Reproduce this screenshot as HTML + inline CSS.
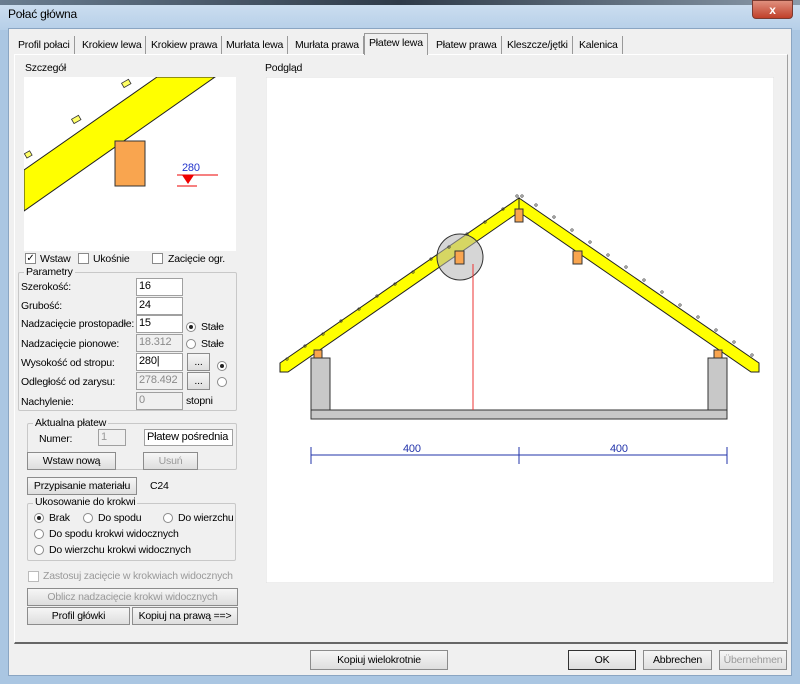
<!DOCTYPE html>
<html><head><meta charset="utf-8"><style>
*{box-sizing:border-box;margin:0;padding:0}
body{width:800px;height:684px;overflow:hidden;background:#aac6e2;font-family:"Liberation Sans",sans-serif;font-size:10.5px;letter-spacing:-0.2px;color:#000;position:relative}
.a{position:absolute;white-space:nowrap}
.title{left:0;top:0;width:800px;height:30px;background:linear-gradient(#cfe0f1,#b6cfe8)}
.body{left:8px;top:28px;width:784px;height:648px;background:#f0f0f0;border:1px solid #8aa5c2}
.tab{top:36px;height:18px;padding:3px 4px 0;border-right:1px solid #999;background:#f0f0f0}
.inp{height:18px;background:#fff;border:1px solid #a0a0a0;padding:1px 2px;font-size:11px}
.dis{color:#8a8a8a;background:#f0f0f0}
.btn{height:18px;background:linear-gradient(#f6f6f6,#dedede);border:1px solid #8c8c8c;text-align:center;padding-top:2px}
.grp{border:1px solid #c8c8c8;border-radius:2px}
.lg{background:#f0f0f0;padding:0 2px}
.rb{width:10px;height:10px;border:1px solid #8a8a8a;border-radius:50%;background:#fff}
.rb.on::after{content:"";position:absolute;left:2px;top:2px;width:4px;height:4px;border-radius:50%;background:#222}
.cb{width:11px;height:11px;border:1px solid #8a8a8a;background:#fff}
</style></head><body>
<div class="a title"></div>
<div class="a" style="left:0;top:0;width:800px;height:5px;background:linear-gradient(90deg,#6a7d90,#2e3a48 50%,#8a9aaa)"></div>
<div class="a" style="left:8px;top:7px;font-size:12px">Połać główna</div>
<div class="a" style="left:752px;top:0;width:41px;height:19px;background:linear-gradient(#e0907e,#c0402a);border:1px solid #7a3a30;border-radius:0 0 4px 4px;color:#fff;text-align:center;font-weight:bold;font-size:12px;padding-top:2px">x</div>
<div class="a body"></div>
<div class="a" style="left:14px;top:54px;width:774px;height:590px;border:1px solid #a0a0a0;border-left-color:#fff;border-top-color:#fff;border-bottom:2px solid #666"></div>
<div class="a tab" style="left:14px">Profil połaci</div>
<div class="a tab" style="left:78px">Krokiew lewa</div>
<div class="a tab" style="left:147px">Krokiew prawa</div>
<div class="a tab" style="left:222px">Murłata lewa</div>
<div class="a tab" style="left:291px">Murłata prawa</div>
<div class="a tab" style="left:364px;top:33px;height:22px;border:1px solid #999;border-bottom:none;background:#f0f0f0">Płatew lewa</div>
<div class="a tab" style="left:432px">Płatew prawa</div>
<div class="a tab" style="left:503px">Kleszcze/jętki</div>
<div class="a tab" style="left:575px">Kalenica</div>

<div class="a" style="left:25px;top:62px">Szczegół</div>
<div class="a" style="left:265px;top:62px">Podgląd</div>

<svg class="a" style="left:24px;top:77px" width="212" height="174" viewBox="24 77 212 174">
<rect x="24" y="77" width="212" height="174" fill="#fff"/>
<polygon points="24,170 157,77 215,77 24,211" fill="#ff0" stroke="#222" stroke-width="1"/>
<rect x="115" y="141" width="30" height="45" fill="#f9a54f" stroke="#333"/>
<g fill="#ff6" stroke="#333" stroke-width=".8"><rect x="122" y="81" width="8" height="5" transform="rotate(-30 126 83)"/><rect x="72" y="117" width="8" height="5" transform="rotate(-30 76 119)"/><rect x="25" y="152" width="6" height="5" transform="rotate(-30 28 154)"/></g>
<text x="182" y="171" fill="#2233cc" font-size="11" font-family="Liberation Sans">280</text>
<line x1="177" y1="175" x2="218" y2="175" stroke="#e00"/>
<polygon points="182,175 194,175 188,184" fill="#e00"/>
<line x1="177" y1="186" x2="197" y2="186" stroke="#e00"/>
</svg>

<svg class="a" style="left:266px;top:77px" width="508" height="506" viewBox="266 77 508 506">
<rect x="266" y="77" width="508" height="506" fill="#fff" stroke="#ddd"/>
<rect x="311" y="358" width="19" height="52" fill="#c8c8c8" stroke="#333"/>
<rect x="708" y="358" width="19" height="52" fill="#c8c8c8" stroke="#333"/>
<rect x="311" y="410" width="416" height="9" fill="#c8c8c8" stroke="#333"/>
<polygon points="280,363 519,198 519,212 288,372 280,372" fill="#ff0" stroke="#222"/>
<polygon points="519,198 759,363 759,372 751,372 519,212" fill="#ff0" stroke="#222"/>
<circle cx="460" cy="257" r="23" fill="rgba(180,180,180,.55)" stroke="#333"/>
<g fill="#f9a54f" stroke="#333"><rect x="455" y="251" width="9" height="13"/><rect x="573" y="251" width="9" height="13"/><rect x="515" y="209" width="8" height="13"/><rect x="314" y="350" width="8" height="8"/><rect x="714" y="350" width="8" height="8"/></g>
<line x1="473" y1="264" x2="473" y2="410" stroke="#e33"/>
<g stroke="#333" fill="none" stroke-width=".7">
<circle cx="287" cy="359" r="1.2"/><circle cx="305" cy="346" r="1.2"/><circle cx="323" cy="334" r="1.2"/><circle cx="341" cy="321" r="1.2"/><circle cx="359" cy="309" r="1.2"/><circle cx="377" cy="296" r="1.2"/><circle cx="395" cy="284" r="1.2"/><circle cx="413" cy="272" r="1.2"/><circle cx="431" cy="259" r="1.2"/><circle cx="449" cy="247" r="1.2"/><circle cx="467" cy="234" r="1.2"/><circle cx="485" cy="222" r="1.2"/><circle cx="503" cy="209" r="1.2"/><circle cx="517" cy="196" r="1.2"/><circle cx="522" cy="196" r="1.2"/>
<circle cx="536" cy="205" r="1.2"/><circle cx="554" cy="217" r="1.2"/><circle cx="572" cy="230" r="1.2"/><circle cx="590" cy="242" r="1.2"/><circle cx="608" cy="255" r="1.2"/><circle cx="626" cy="267" r="1.2"/><circle cx="644" cy="280" r="1.2"/><circle cx="662" cy="292" r="1.2"/><circle cx="680" cy="305" r="1.2"/><circle cx="698" cy="317" r="1.2"/><circle cx="716" cy="330" r="1.2"/><circle cx="734" cy="342" r="1.2"/><circle cx="752" cy="355" r="1.2"/></g>
<g stroke="#2233aa"><line x1="311" y1="455" x2="727" y2="455"/><line x1="311" y1="447" x2="311" y2="464"/><line x1="519" y1="447" x2="519" y2="464"/><line x1="727" y1="447" x2="727" y2="464"/></g>
<text x="403" y="452" fill="#2233aa" font-size="11" font-family="Liberation Sans">400</text>
<text x="610" y="452" fill="#2233aa" font-size="11" font-family="Liberation Sans">400</text>
</svg>

<div class="a cb" style="left:25px;top:253px;font-size:10px;line-height:9px;text-align:center">✓</div><div class="a" style="left:40px;top:253px">Wstaw</div>
<div class="a cb" style="left:78px;top:253px"></div><div class="a" style="left:93px;top:253px">Ukośnie</div>
<div class="a cb" style="left:152px;top:253px"></div><div class="a" style="left:168px;top:253px">Zacięcie ogr.</div>

<div class="a grp" style="left:18px;top:272px;width:219px;height:139px"></div>
<div class="a lg" style="left:24px;top:266px">Parametry</div>
<div class="a" style="left:21px;top:281px">Szerokość:</div><div class="a inp" style="left:136px;top:278px;width:47px">16</div>
<div class="a" style="left:21px;top:300px">Grubość:</div><div class="a inp" style="left:136px;top:297px;width:47px">24</div>
<div class="a" style="left:21px;top:318px">Nadzacięcie prostopadłe:</div><div class="a inp" style="left:136px;top:315px;width:47px">15</div>
<div class="a" style="left:21px;top:338px">Nadzacięcie pionowe:</div><div class="a inp dis" style="left:136px;top:334px;width:47px">18.312</div>
<div class="a" style="left:21px;top:357px">Wysokość od stropu:</div><div class="a inp" style="left:136px;top:353px;width:47px">280|</div>
<div class="a" style="left:21px;top:376px">Odległość od zarysu:</div><div class="a inp dis" style="left:136px;top:372px;width:47px">278.492</div>
<div class="a" style="left:21px;top:396px">Nachylenie:</div><div class="a inp dis" style="left:136px;top:392px;width:47px">0</div>
<div class="a rb on" style="left:186px;top:322px"></div><div class="a" style="left:201px;top:321px">Stałe</div>
<div class="a rb" style="left:186px;top:339px"></div><div class="a" style="left:201px;top:338px">Stałe</div>
<div class="a btn" style="left:187px;top:353px;width:23px">...</div>
<div class="a btn" style="left:187px;top:372px;width:23px">...</div>
<div class="a rb on" style="left:217px;top:361px"></div>
<div class="a rb" style="left:217px;top:377px"></div>
<div class="a" style="left:186px;top:395px">stopni</div>

<div class="a grp" style="left:27px;top:423px;width:210px;height:47px"></div>
<div class="a lg" style="left:33px;top:417px">Aktualna płatew</div>
<div class="a" style="left:39px;top:433px">Numer:</div>
<div class="a inp dis" style="left:98px;top:429px;width:28px;height:17px;color:#999">1</div>
<div class="a inp" style="left:144px;top:429px;width:89px;height:17px">Płatew pośrednia</div>
<div class="a btn" style="left:27px;top:452px;width:89px">Wstaw nową</div>
<div class="a btn" style="left:143px;top:452px;width:55px;color:#999">Usuń</div>

<div class="a btn" style="left:27px;top:477px;width:110px">Przypisanie materiału</div>
<div class="a" style="left:150px;top:480px">C24</div>

<div class="a grp" style="left:27px;top:503px;width:209px;height:58px"></div>
<div class="a lg" style="left:33px;top:496px">Ukosowanie do krokwi</div>
<div class="a rb on" style="left:34px;top:513px"></div><div class="a" style="left:49px;top:512px">Brak</div>
<div class="a rb" style="left:83px;top:513px"></div><div class="a" style="left:98px;top:512px">Do spodu</div>
<div class="a rb" style="left:163px;top:513px"></div><div class="a" style="left:178px;top:512px">Do wierzchu</div>
<div class="a rb" style="left:34px;top:529px"></div><div class="a" style="left:49px;top:528px">Do spodu krokwi widocznych</div>
<div class="a rb" style="left:34px;top:545px"></div><div class="a" style="left:49px;top:544px">Do wierzchu krokwi widocznych</div>

<div class="a cb" style="left:28px;top:571px;border-color:#bbb"></div><div class="a" style="left:43px;top:570px;color:#999">Zastosuj zacięcie w krokwiach widocznych</div>
<div class="a btn" style="left:27px;top:588px;width:211px;color:#999">Oblicz nadzacięcie krokwi widocznych</div>
<div class="a btn" style="left:27px;top:607px;width:103px">Profil główki</div>
<div class="a btn" style="left:132px;top:607px;width:106px">Kopiuj na prawą ==&gt;</div>

<div class="a btn" style="left:310px;top:650px;width:138px;height:20px;padding-top:3px">Kopiuj wielokrotnie</div>
<div class="a btn" style="left:568px;top:650px;width:68px;height:20px;padding-top:3px;border-color:#333">OK</div>
<div class="a btn" style="left:643px;top:650px;width:69px;height:20px;padding-top:3px">Abbrechen</div>
<div class="a btn" style="left:719px;top:650px;width:68px;height:20px;padding-top:3px;color:#999">Übernehmen</div>
</body></html>
